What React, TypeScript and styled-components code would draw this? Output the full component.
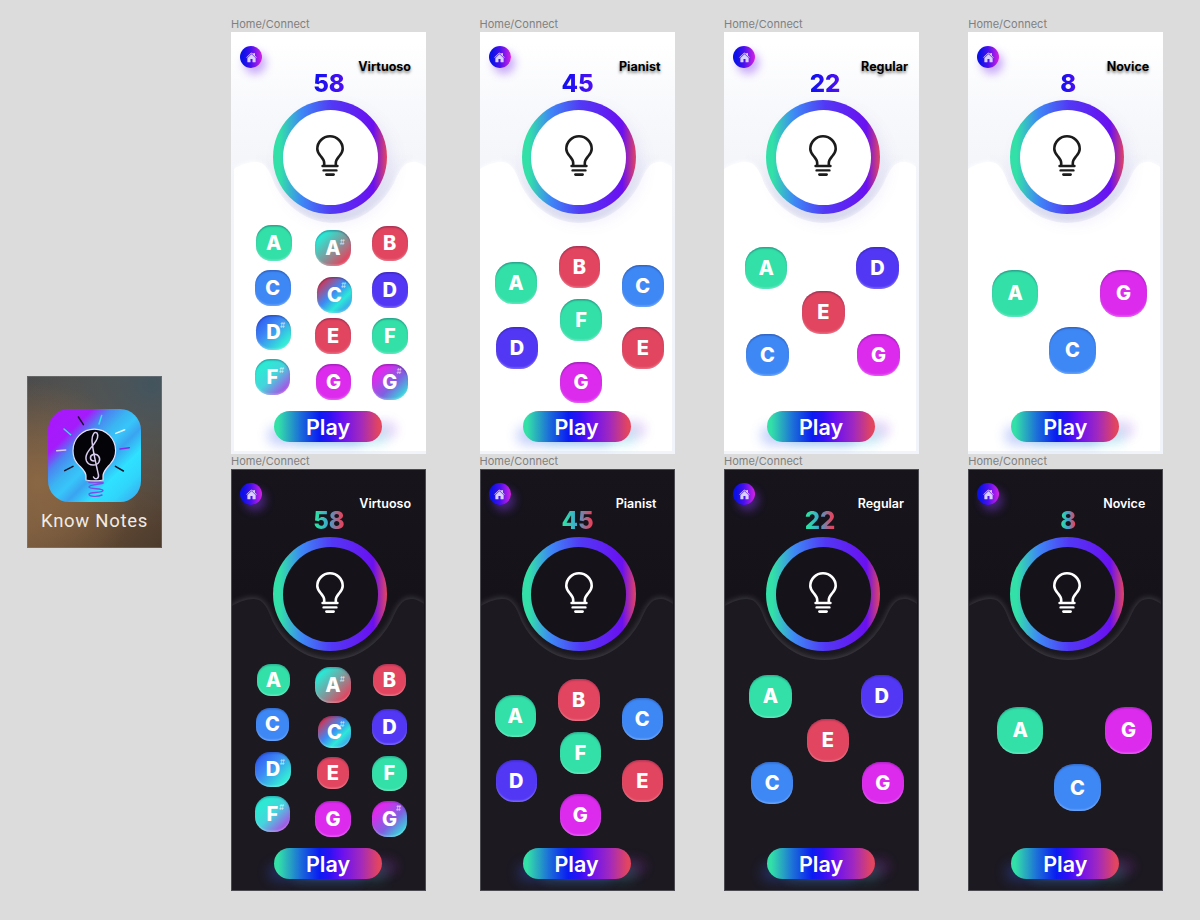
import React from 'react';
import styled, { createGlobalStyle } from 'styled-components';
import { IoHome } from 'react-icons/io5';

type Mode = 'light' | 'dark';
type Note = 'A' | 'B' | 'C' | 'D' | 'E' | 'F' | 'G' | 'A#' | 'C#' | 'D#' | 'F#' | 'G#';
type KeyDef = [Note, number, number, number?];

interface ScreenDef {
  score: number;
  rank: string;
  rankRight: number;
  scoreShift: number;
  size: number;
  keys: KeyDef[];
}

const FIELD_TOP = 182;

const TONES: Record<Note, string> = {
  A: '#33e0a8',
  F: '#33e0a8',
  B: '#e2455f',
  E: '#e2455f',
  C: '#3e88f5',
  D: '#5238f5',
  G: '#dd2bee',
  'A#': 'linear-gradient(135deg, #2be8d4 18%, #7f9a9c 52%, #e2455f 84%)',
  'C#': 'linear-gradient(135deg, #dd2f48 10%, #3e88f5 45%, #2de8d8 68%, #3e88f5 95%)',
  'D#': 'linear-gradient(135deg, #2f5cf0 10%, #3e88f5 40%, #33e8d8 80%)',
  'F#': 'linear-gradient(135deg, #2ee8d4 25%, #45d4dc 50%, #c030e8 95%)',
  'G#': 'linear-gradient(135deg, #dd2bee 22%, #7d62e0 58%, #2fe4dc 90%)',
};

const SHARP_TOP: Record<string, number> = { A: 8, C: 4, D: 6, F: 7, G: 3 };

const SCREENS: Record<Mode, ScreenDef[]> = {
  light: [
    {
      score: 58, rank: 'Virtuoso', rankRight: 15, scoreShift: 0, size: 35.5,
      keys: [
        ['A', 25, 193], ['A#', 84.3, 198], ['B', 141, 193.7],
        ['C', 24, 238], ['C#', 85.7, 245.3], ['D', 141, 240.3],
        ['D#', 24.7, 282.7], ['E', 84.3, 286.3], ['F', 141, 286.3],
        ['F#', 23.7, 327.3], ['G', 84.7, 332], ['G#', 141, 332],
      ],
    },
    {
      score: 45, rank: 'Pianist', rankRight: 14, scoreShift: 0, size: 41.5,
      keys: [
        ['A', 15.8, 230.3], ['B', 79.2, 214], ['C', 142.5, 233.3], ['F', 80.8, 267.3],
        ['D', 16.8, 295.3], ['E', 142.5, 295.3], ['G', 80.8, 329.7],
      ],
    },
    {
      score: 22, rank: 'Regular', rankRight: 11, scoreShift: 3, size: 42.3,
      keys: [['A', 21, 215], ['D', 132.3, 215], ['E', 78.3, 259.3], ['C', 22.3, 302], ['G', 133.3, 302]],
    },
    {
      score: 8, rank: 'Novice', rankRight: 14, scoreShift: 2, size: 46.5,
      keys: [['A', 23.7, 238], ['G', 132, 238], ['C', 81, 295]],
    },
  ],
  dark: [
    {
      score: 58, rank: 'Virtuoso', rankRight: 15, scoreShift: 0, size: 35.5,
      keys: [
        ['A', 26.3, 194.7, 32.3], ['A#', 84.3, 198], ['B', 142.3, 195, 32.3],
        ['C', 25.3, 239.3, 32.3], ['C#', 87.3, 246.7, 32.3], ['D', 140.7, 240.3],
        ['D#', 24.3, 282.7], ['E', 85.7, 288, 32.3], ['F', 140.7, 286.7],
        ['F#', 23.7, 327.3], ['G', 84.3, 332], ['G#', 140.7, 332],
      ],
    },
    {
      score: 45, rank: 'Pianist', rankRight: 18, scoreShift: 0, size: 41.5,
      keys: [
        ['A', 15, 226], ['B', 78.5, 210], ['C', 142, 229], ['F', 80, 263],
        ['D', 16, 291], ['E', 142, 291], ['G', 80, 325],
      ],
    },
    {
      score: 22, rank: 'Regular', rankRight: 15, scoreShift: -2, size: 42.3,
      keys: [['A', 25.3, 206.3], ['D', 136.7, 206.3], ['E', 82.7, 250.3], ['C', 27, 293], ['G', 137.7, 293]],
    },
    {
      score: 8, rank: 'Novice', rankRight: 18, scoreShift: 2, size: 46.5,
      keys: [['A', 28.7, 238], ['G', 137, 238], ['C', 86, 295.3]],
    },
  ],
};

const GlobalStyle = createGlobalStyle`
  html, body {
    margin: 0;
    padding: 0;
    background: #dcdcdc;
  }
`;

const Canvas = styled.div`
  width: 1200px;
  height: 920px;
  overflow: hidden;
  box-sizing: border-box;
  display: flex;
  gap: 69px;
  padding: 18px 0 0 27px;
  background: #dcdcdc;
  font-family: Inter, 'Liberation Sans', sans-serif;
`;

const AppTile = styled.div`
  width: 135px;
  height: 172px;
  flex: none;
  margin-top: 358px;
  box-sizing: border-box;
  display: flex;
  flex-direction: column;
  align-items: center;
  padding-top: 33px;
  background:
    radial-gradient(circle at 8% 62%, #8a6744 0%, rgba(138, 103, 68, 0) 62%),
    radial-gradient(circle at 92% 5%, #43545e 0%, rgba(67, 84, 94, 0) 70%),
    linear-gradient(135deg, #4b4a4a 0%, #76583d 50%, #4b3a2c 100%);
  box-shadow: inset 0 0 0 1px rgba(150, 150, 150, 0.35);
`;

const AppName = styled.div`
  margin-top: 9px;
  color: #f0ebe4;
  font-family: Roboto, sans-serif;
  font-size: 18.5px;
  line-height: 21px;
  letter-spacing: 0.7px;
  white-space: nowrap;
`;

const Board = styled.div`
  display: grid;
  grid-template-columns: 248.5px 244.5px 244.3px 195.3px;
  grid-auto-rows: 436px;
  row-gap: 1px;
`;

const Artboard = styled.div`
  display: flex;
  flex-direction: column;
`;

const BoardLabel = styled.div`
  height: 14px;
  color: #808080;
  font-size: 11px;
  line-height: 13px;
  white-space: nowrap;
`;

const Phone = styled.div<{ $mode: Mode }>`
  position: relative;
  width: 195px;
  height: 422px;
  overflow: hidden;
  display: flex;
  flex-direction: column;
  background: ${(p) =>
    p.$mode === 'light'
      ? 'linear-gradient(#ffffff 12px, #f8f9fc 70px, #f5f6fa 125px, #f2f4fb 200px)'
      : 'linear-gradient(#17141c 0, #15121a 130px, #1c1921 200px)'};
  box-shadow: ${(p) => (p.$mode === 'dark' ? 'inset 0 0 0 1px #4b4a50' : 'none')};
`;

const Wave = styled.svg<{ $mode: Mode; $left: number }>`
  position: absolute;
  top: 0;
  left: ${(p) => p.$left}px;
  width: 192px;
  height: ${(p) => (p.$mode === 'light' ? 419 : 421)}px;
`;

const WaveShape = styled.path<{ $mode: Mode }>`
  fill: ${(p) => (p.$mode === 'light' ? '#ffffff' : '#1c1921')};
  filter: ${(p) =>
    p.$mode === 'light'
      ? 'drop-shadow(0 -1px 2px rgba(255, 255, 255, 0.8))'
      : 'drop-shadow(0 -1px 3px rgba(255, 255, 255, 0.2))'};
`;

const Header = styled.header`
  position: relative;
  height: 36px;
  flex: none;
`;

const HomeButton = styled.div`
  position: absolute;
  top: 14px;
  left: 9px;
  width: 22px;
  height: 22px;
  display: flex;
  align-items: center;
  justify-content: center;
  border-radius: 50%;
  color: #d8d2ff;
  background: linear-gradient(90deg, #0d10e8 15%, #4a10ee 50%, #d522e2 100%);
  box-shadow: 4px 6px 8px rgba(130, 60, 240, 0.42);
`;

const Rank = styled.div<{ $mode: Mode; $right: number }>`
  position: absolute;
  top: 27px;
  right: ${(p) => p.$right}px;
  color: ${(p) => (p.$mode === 'light' ? '#000000' : '#ffffff')};
  font-size: 12.5px;
  line-height: 16px;
  font-weight: ${(p) => (p.$mode === 'light' ? 700 : 600)};
  text-shadow: ${(p) => (p.$mode === 'light' ? '0 2px 3px rgba(0, 0, 0, 0.5)' : 'none')};
  white-space: nowrap;
`;

const Score = styled.div<{ $mode: Mode; $shift: number }>`
  position: relative;
  align-self: center;
  margin: 2px 0 0 ${(p) => 1 + p.$shift * 2}px;
  height: 28px;
  font-size: 24px;
  line-height: 28px;
  font-weight: 800;
  background: ${(p) =>
    p.$mode === 'light'
      ? 'linear-gradient(90deg, #0c10f0, #5010f2)'
      : 'linear-gradient(90deg, #2fdfa6 10%, #3fa2d0 50%, #e2455f 90%)'};
  -webkit-background-clip: text;
  background-clip: text;
  color: transparent;
`;

const Ring = styled.div<{ $mode: Mode }>`
  position: relative;
  width: 114px;
  height: 114px;
  flex: none;
  margin: 2px 0 0 42px;
  box-sizing: border-box;
  padding: 9.5px;
  border-radius: 50%;
  background: linear-gradient(90deg, #33e0a8 6%, #3e88f5 25%, #5238f5 52%, #6a10f0 88%, #e2455f 100%);
  box-shadow: ${(p) => (p.$mode === 'light' ? '6px 8px 16px rgba(110, 90, 230, 0.1)' : 'none')};
`;

const RingCore = styled.div<{ $mode: Mode }>`
  width: 100%;
  height: 100%;
  box-sizing: border-box;
  padding-bottom: 2px;
  display: flex;
  align-items: center;
  justify-content: center;
  border-radius: 50%;
  color: ${(p) => (p.$mode === 'light' ? '#1b1b1b' : '#ffffff')};
  background: ${(p) => (p.$mode === 'light' ? '#ffffff' : '#15121a')};
`;

const KeyField = styled.div`
  position: relative;
  height: 190px;
  flex: none;
`;

const NoteKey = styled.div<{ $note: Note; $mode: Mode; $size: number; $x: number; $y: number }>`
  position: absolute;
  left: ${(p) => p.$x}px;
  top: ${(p) => p.$y}px;
  width: ${(p) => p.$size}px;
  height: ${(p) => p.$size}px;
  display: flex;
  align-items: center;
  justify-content: center;
  border-radius: 43%;
  color: #ffffff;
  font-size: 20px;
  font-weight: 800;
  background: ${(p) => TONES[p.$note]};
  box-shadow:
    inset 0 1.5px 1.5px rgba(10, 0, 60, ${(p) => (p.$mode === 'light' ? 0.28 : 0.2)}),
    inset 0 -1.5px 1.5px rgba(255, 255, 255, 0.24);
`;

const SharpMark = styled.span<{ $top: number }>`
  position: absolute;
  top: ${(p) => p.$top}px;
  right: 6px;
  color: rgba(255, 255, 255, 0.75);
  font-size: 8px;
  line-height: 8px;
  font-weight: 400;
`;

const PlayButton = styled.div<{ $mode: Mode }>`
  position: relative;
  width: 108px;
  height: 31px;
  flex: none;
  margin: 7px 1px 0 0;
  align-self: center;
  display: flex;
  align-items: center;
  justify-content: center;
  border-radius: 16px;
  color: #ffffff;
  font-size: 21.5px;
  font-weight: 600;
  background: linear-gradient(90deg, #33e0a8 4%, #1c6ed8 24%, #0a1cf2 42%, #3010f4 52%, #6a10f0 63%, #a028c0 80%, #e2455f 97%);
  box-shadow: ${(p) =>
    p.$mode === 'light'
      ? '-12px 9px 12px -6px rgba(70, 110, 240, 0.32), 12px 9px 12px -6px rgba(90, 220, 225, 0.3), 22px 3px 10px -6px rgba(170, 90, 230, 0.2)'
      : '-12px 9px 12px -6px rgba(50, 90, 220, 0.3), 12px 9px 12px -6px rgba(60, 190, 190, 0.2), 22px 3px 10px -6px rgba(170, 50, 200, 0.18)'};
`;

const BulbIcon = () => (
  <svg width="28" height="42" viewBox="0 0 28 42" fill="none" stroke="currentColor" strokeLinecap="round">
    <path
      strokeWidth="2.6"
      strokeLinejoin="round"
      d="M8.2 30V28C8.2 25 6.6 23.4 4.6 21C2.6 18.6 1.3 16.5 1.3 14A12.7 12.7 0 0 1 26.7 14C26.7 16.5 25.4 18.6 23.4 21C21.4 23.4 19.8 25 19.8 28V30"
    />
    <path strokeWidth="2.6" d="M6.6 31H21.4" />
    <path strokeWidth="2.4" d="M7.6 35.4H20.4" />
    <path strokeWidth="2.6" d="M10.4 39.6H17.6" />
  </svg>
);

const RAYS = [
  ['30.4 8', '35.4 15.7', '#1a1030'],
  ['53.7 6.4', '51 15', '#38dff0'],
  ['16 20', '22.7 25.7', '#30e0ee'],
  ['67.7 24.4', '76.7 20.7', '#e8f4ff'],
  ['8.7 41.7', '17.7 41', '#d8c8f4'],
  ['72 40', '81.3 38.7', '#8428ee'],
  ['16.7 61.7', '25 57.4', '#141026'],
  ['67.4 57.4', '75.4 62', '#141026'],
];

const AppLogo = () => (
  <svg width="93" height="93" viewBox="0 0 93 93">
    <defs>
      <linearGradient id="logoBg" x1="0" y1="0" x2="1" y2="1">
        <stop offset="0" stopColor="#a917fb" />
        <stop offset="0.24" stopColor="#a41bfb" />
        <stop offset="0.34" stopColor="#4a86f0" />
        <stop offset="0.44" stopColor="#3bb4f2" />
        <stop offset="0.52" stopColor="#37c6fa" />
        <stop offset="0.6" stopColor="#3aa4f0" />
        <stop offset="0.72" stopColor="#2fe2ff" />
        <stop offset="0.84" stopColor="#30d4fb" />
        <stop offset="1" stopColor="#3aa0ee" />
      </linearGradient>
    </defs>
    <rect width="93" height="93" rx="21" fill="url(#logoBg)" />
    {RAYS.map(([from, to, color]) => (
      <path key={from} d={`M${from}L${to}`} stroke={color} strokeWidth="1.5" strokeLinecap="round" />
    ))}
    <path
      d="M38 71V67C38 62 33 59 29 54C26 50.500 25 46 25 41.500A21.300 21.300 0 0 1 67.600 41.500C67.600 46 66 50.500 63 54C59 59 55 62 55 67V71C50 72 43 72 38 71Z"
      fill="#040408"
      stroke="#e6e0fb"
      strokeWidth="1.2"
    />
    <path
      d="M46 52C42 52 41 47 45 45.500C50 44 53 49 51 53C49 57 41 57.500 38.500 52C36 46 42 40 46 35C49 31 51 27 49 24C46.500 22 44 26 44 31C44 38 48 55 50.500 66C51 70 47 71 45.500 68"
      fill="none"
      stroke="#d8cdf0"
      strokeWidth="1.5"
      strokeLinecap="round"
    />
    <path
      d="M41 73.500H55C57 75.500 41 75 41 78C41 80.500 55 79 55 81.500C55 84 41 83 41 85C41 88 50 88 54 86"
      fill="none"
      stroke="#7a4fe8"
      strokeWidth="1.4"
      strokeLinecap="round"
    />
  </svg>
);

const WAVE_PATH =
  'M0 137C7 133 14 130 22 130C32 130 36 139 41 152C52 174 74 191 101 191C128 191 150 174 162 152C168 139 172 130 182 130C187 130 191 132 195 135V440H0Z';

const Screen = ({ mode, def, waveLeft }: { mode: Mode; def: ScreenDef; waveLeft: number }) => (
  <Artboard>
    <BoardLabel>Home/Connect</BoardLabel>
    <Phone $mode={mode}>
      <Wave
        $mode={mode}
        $left={waveLeft}
        viewBox={`0 0 195 ${mode === 'light' ? 419 : 421}`}
        preserveAspectRatio="none"
      >
        <defs>
          <linearGradient id="notchFade" x1="0" y1="0" x2="0" y2="1">
            <stop offset="0" stopColor="#e1e3f0" stopOpacity="0" />
            <stop offset="1" stopColor="#e1e3f0" />
          </linearGradient>
        </defs>
        {mode === 'light' && <rect x="22" y="120" width="160" height="75" fill="url(#notchFade)" />}
        <WaveShape $mode={mode} d={WAVE_PATH} />
      </Wave>
      <Header>
        <HomeButton>
          <IoHome size={11} />
        </HomeButton>
        <Rank $mode={mode} $right={def.rankRight}>
          {def.rank}
        </Rank>
      </Header>
      <Score $mode={mode} $shift={def.scoreShift}>
        {def.score}
      </Score>
      <Ring $mode={mode}>
        <RingCore $mode={mode}>
          <BulbIcon />
        </RingCore>
      </Ring>
      <KeyField>
        {def.keys.map(([note, x, y, size]) => (
          <NoteKey key={note} $note={note} $mode={mode} $size={size ?? def.size} $x={x} $y={y - FIELD_TOP}>
            {note[0]}
            {note.length > 1 && <SharpMark $top={SHARP_TOP[note[0]]}>#</SharpMark>}
          </NoteKey>
        ))}
      </KeyField>
      <PlayButton $mode={mode}>Play</PlayButton>
    </Phone>
  </Artboard>
);

const App = () => (
  <>
    <GlobalStyle />
    <Canvas>
      <AppTile>
        <AppLogo />
        <AppName>Know Notes</AppName>
      </AppTile>
      <Board>
        {SCREENS.light.map((def, i) => (
          <Screen key={def.rank} mode="light" def={def} waveLeft={i === 0 ? 3 : 0} />
        ))}
        {SCREENS.dark.map((def) => (
          <Screen key={def.rank} mode="dark" def={def} waveLeft={1} />
        ))}
      </Board>
    </Canvas>
  </>
);

export default App;
